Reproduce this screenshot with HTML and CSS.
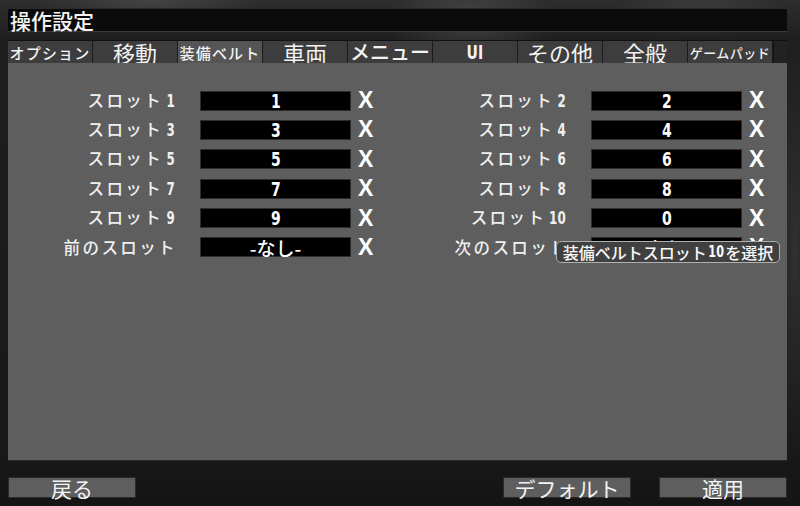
FILE: index.html
```html
<!DOCTYPE html>
<html lang="ja">
<head>
<meta charset="utf-8">
<title>操作設定</title>
<link rel="stylesheet" href="styles.css">
</head>
<body>
<div class="screen">
  <div class="titlebar"><span class="title">操作設定</span></div>
  <div class="tabs">
    <div class="tab t-sm">オプション</div>
    <div class="tab t-lg">移動</div>
    <div class="tab t-sm active">装備ベルト</div>
    <div class="tab t-lg">車両</div>
    <div class="tab t-md">メニュー</div>
    <div class="tab t-ui"><span class="cond">UI</span></div>
    <div class="tab t-lg">その他</div>
    <div class="tab t-lg">全般</div>
    <div class="tab t-xs">ゲームパッド</div>
    <div class="tab-fill"></div>
  </div>
  <div class="panel">
    <div class="grid">
      <div class="bind"><span class="label">スロット<span class="num">1</span></span><span class="key"><span class="cond">1</span></span><span class="clear">X</span></div>
      <div class="bind"><span class="label">スロット<span class="num">2</span></span><span class="key"><span class="cond">2</span></span><span class="clear">X</span></div>
      <div class="bind"><span class="label">スロット<span class="num">3</span></span><span class="key"><span class="cond">3</span></span><span class="clear">X</span></div>
      <div class="bind"><span class="label">スロット<span class="num">4</span></span><span class="key"><span class="cond">4</span></span><span class="clear">X</span></div>
      <div class="bind"><span class="label">スロット<span class="num">5</span></span><span class="key"><span class="cond">5</span></span><span class="clear">X</span></div>
      <div class="bind"><span class="label">スロット<span class="num">6</span></span><span class="key"><span class="cond">6</span></span><span class="clear">X</span></div>
      <div class="bind"><span class="label">スロット<span class="num">7</span></span><span class="key"><span class="cond">7</span></span><span class="clear">X</span></div>
      <div class="bind"><span class="label">スロット<span class="num">8</span></span><span class="key"><span class="cond">8</span></span><span class="clear">X</span></div>
      <div class="bind"><span class="label">スロット<span class="num">9</span></span><span class="key"><span class="cond">9</span></span><span class="clear">X</span></div>
      <div class="bind"><span class="label">スロット<span class="num wide">10</span></span><span class="key"><span class="cond">0</span></span><span class="clear">X</span></div>
      <div class="bind"><span class="label">前のスロット</span><span class="key jp">-なし-</span><span class="clear">X</span></div>
      <div class="bind"><span class="label">次のスロット</span><span class="key jp">-なし-</span><span class="clear">X</span></div>
    </div>
    <div class="tooltip">装備ベルトスロット<span class="tnum">10</span>を選択</div>
  </div>
  <div class="footer">
    <div class="btn">戻る</div>
    <div class="spacer"></div>
    <div class="btn">デフォルト</div>
    <div class="btn">適用</div>
  </div>
</div>
</body>
</html>
```

FILE: styles.css
```css
html, body {
  margin: 0;
  padding: 0;
}
body {
  width: 800px;
  height: 506px;
  overflow: hidden;
  font-family: "Noto Sans CJK JP", "Noto Sans", sans-serif;
  color: #f2f2f2;
  background:
    radial-gradient(ellipse 120px 60px at 470px 20px, rgba(120,120,120,0.35), rgba(0,0,0,0) 70%),
    radial-gradient(ellipse 160px 40px at 150px 0px, rgba(110,110,110,0.35), rgba(0,0,0,0) 70%),
    radial-gradient(ellipse 120px 40px at 700px 10px, rgba(90,90,90,0.35), rgba(0,0,0,0) 70%),
    radial-gradient(ellipse 30px 300px at 795px 250px, rgba(70,70,70,0.5), rgba(0,0,0,0) 70%),
    linear-gradient(180deg, #2e2e2e 0px, #1f1f1f 40px, #181818 460px, #141414 506px);
}
.screen {
  box-sizing: border-box;
  width: 800px;
  height: 506px;
  padding: 8px 13px 0 8px;
  display: flex;
  flex-direction: column;
}
.titlebar {
  box-sizing: border-box;
  height: 24px;
  background: #0b0b0b;
  border-top: 1px solid #2c2c2c;
  border-bottom: 1px solid #3a3a3a;
  display: flex;
  align-items: center;
  padding-left: 2px;
  margin-bottom: 8px;
}
.title {
  font-size: 21px;
  font-weight: 500;
  line-height: 1;
  color: #f4f4f4;
}
.tabs {
  height: 23px;
  display: flex;
  background: #1e1e1e;
  border-top: 1px solid #111;
  box-sizing: border-box;
}
.tab {
  box-sizing: border-box;
  width: 85px;
  height: 22px;
  background: #3d3d3d;
  border-right: 1px solid #1c1c1c;
  display: flex;
  align-items: center;
  justify-content: center;
  line-height: 1;
  white-space: nowrap;
  color: #f2f2f2;
  font-weight: 500;
}
.tab.active {
  background: #555555;
}
.t-sm { font-size: 15px; letter-spacing: 1.2px; }
.t-lg { font-size: 22px; font-weight: 400; }
.t-md { font-size: 20px; }
.t-xs { font-size: 13px; letter-spacing: 0.5px; }
.t-ui {
  font-family: "DejaVu Sans", sans-serif;
  font-weight: bold;
  font-size: 20px;
}
.cond {
  display: inline-block;
  transform: scaleX(0.7);
}
.tab-fill {
  flex: 1;
  background: #222;
  border-left: 1px solid #111;
}
.panel {
  position: relative;
  height: 398px;
  background: #5e5e5e;
  border-bottom: 1px solid #2a2a2a;
  box-sizing: border-box;
  padding-top: 26px;
}
.grid {
  display: grid;
  grid-template-columns: 391px 388px;
  row-gap: 9.4px;
}
.bind {
  display: grid;
  grid-template-columns: 167px 151px 17px;
  height: 20px;
  align-items: center;
}
.label {
  justify-self: end;
  font-size: 16.5px;
  font-weight: 500;
  letter-spacing: 2.4px;
  line-height: 1;
  white-space: nowrap;
  color: #f0f0f0;
  margin-right: -2px;
}
.num {
  display: inline-block;
  font-family: "DejaVu Sans", sans-serif;
  font-weight: bold;
  font-size: 17px;
  letter-spacing: 0;
  transform: scaleX(0.7);
  transform-origin: right center;
  margin-left: 0;
  margin-right: 2px;
}
.num.wide {
  margin-left: -4px;
}
.key {
  box-sizing: border-box;
  margin-left: 25px;
  width: 151px;
  height: 20px;
  background: #000;
  border: 1px solid #2e2e2e;
  display: flex;
  align-items: center;
  justify-content: center;
  font-family: "DejaVu Sans", sans-serif;
  font-weight: bold;
  font-size: 20px;
  line-height: 1;
  color: #fff;
}
.key.jp {
  font-family: "Noto Sans CJK JP", sans-serif;
  font-size: 19px;
  font-weight: 500;
}
.clear {
  margin-left: 32px;
  font-family: "Liberation Sans", "DejaVu Sans", sans-serif;
  font-weight: bold;
  font-size: 23px;
  line-height: 1;
  color: #fff;
}
.tooltip {
  position: absolute;
  left: 548px;
  top: 178px;
  box-sizing: border-box;
  width: 224px;
  height: 22px;
  background: #404040;
  border: 1px solid #b0b0b0;
  border-radius: 5px;
  display: flex;
  align-items: center;
  justify-content: center;
  font-size: 16px;
  font-weight: 500;
  line-height: 1;
  white-space: nowrap;
  color: #fafafa;
}
.tnum {
  display: inline-block;
  font-family: "DejaVu Sans", sans-serif;
  font-weight: bold;
  font-size: 16px;
  transform: scaleX(0.7);
  margin: 0 -2px;
}
.footer {
  display: flex;
  margin-top: 16px;
  height: 21px;
}
.spacer {
  flex: 1;
}
.btn {
  box-sizing: border-box;
  width: 128px;
  height: 21px;
  background: #5e5e5e;
  border: 1px solid #2a2a2a;
  display: flex;
  align-items: center;
  justify-content: center;
  font-size: 21px;
  line-height: 1;
  color: #f4f4f4;
  padding-top: 2px;
}
.btn + .btn {
  margin-left: 28px;
}
```
